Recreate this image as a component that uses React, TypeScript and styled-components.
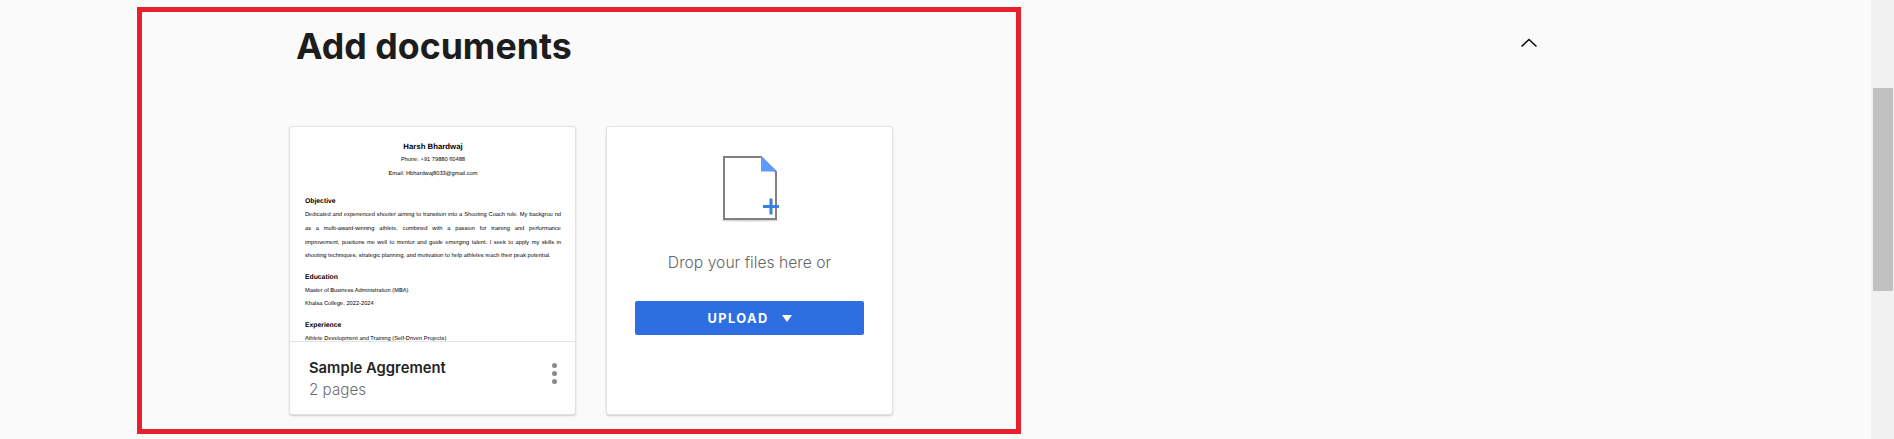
import React from "react";
import styled, { createGlobalStyle } from "styled-components";

const Global = createGlobalStyle`
  html, body { margin: 0; padding: 0; height: 439px; overflow: hidden; background: #fafafa; }
  * { box-sizing: border-box; }
`;

const Page = styled.div`
  position: relative;
  display: flex;
  width: 1894px;
  height: 439px;
  font-family: Inter, "Liberation Sans", sans-serif;
  overflow: hidden;
`;

const Main = styled.main`
  flex: 1;
  padding: 0 0 0 289px;
`;

const Header = styled.header`
  display: flex;
  align-items: center;
  justify-content: space-between;
  width: 1249px;
  height: 92px;
  padding: 0 0 6px 7px;
`;

const Title = styled.h1`
  margin: 6px 0 0;
  font-size: 35.7px;
  line-height: 44px;
  font-weight: 700;
  color: #1d1d1d;
`;

const Collapse = styled.svg`
  display: block;
  width: 18px;
  height: 12px;
  fill: none;
  stroke: #111;
  stroke-width: 1.6;
`;

const Cards = styled.div`
  display: flex;
  gap: 30px;
  margin-top: 34px;
`;

const Card = styled.article`
  width: 287px;
  height: 289px;
  background: #fff;
  border-radius: 3px;
  border: 1px solid #e3e3e3;
  box-shadow: 0 1px 2px rgba(0, 0, 0, 0.18);
  display: flex;
  flex-direction: column;
  overflow: hidden;
`;

const Preview = styled.div`
  height: 215px;
  padding: 13px 14px 0 15px;
  border-bottom: 1px solid #e4e4e4;
  overflow: hidden;
  font-family: "Liberation Sans", Arial, sans-serif;
  text-rendering: geometricPrecision;
  color: #000;
  flex: none;
`;

const DocName = styled.div`
  font-size: 7.8px;
  font-weight: 700;
  line-height: 14px;
  text-align: center;
`;

const DocCentered = styled.div`
  font-size: 5.7px;
  line-height: 13.7px;
  text-align: center;
`;

const DocHeading = styled.div<{ $gap: number }>`
  margin-top: ${(p) => p.$gap}px;
  font-size: 6.8px;
  font-weight: 700;
  line-height: 13.7px;
`;

const DocLine = styled.div<{ $fill?: boolean }>`
  font-size: 5.7px;
  line-height: 13.7px;
  text-align: ${(p) => (p.$fill ? "justify" : "left")};
  text-align-last: ${(p) => (p.$fill ? "justify" : "left")};
`;

const CardFooter = styled.footer`
  flex: 1;
  display: flex;
  align-items: center;
  justify-content: space-between;
  padding: 2px 18px 0 19px;
`;

const FileName = styled.div`
  font-size: 14.8px;
  line-height: 21px;
  font-weight: 600;
  color: #242424;
`;

const FilePages = styled.div`
  font-size: 15.2px;
  line-height: 22px;
  font-weight: 300;
  color: #6e6e6e;
`;

const Kebab = styled.div`
  display: flex;
  flex-direction: column;
  gap: 3px;
  margin-top: -12px;
`;

const Dot = styled.span`
  width: 5px;
  height: 5px;
  border-radius: 50%;
  background: #8a8a8a;
`;

const DropCard = styled(Card)`
  align-items: center;
  padding-top: 29px;
`;

const DropIcon = styled.svg`
  display: block;
  width: 60px;
  height: 66px;
`;

const DropText = styled.p`
  margin: 29px 0 0;
  font-size: 15.7px;
  line-height: 24px;
  font-weight: 300;
  color: #666;
`;

const UploadButton = styled.button`
  display: flex;
  align-items: center;
  justify-content: center;
  gap: 13px;
  width: 229px;
  height: 34px;
  margin-top: 26px;
  border: 0;
  border-radius: 2px;
  background: #2d6fe0;
  color: #fff;
  font-family: Inter, "Liberation Sans", sans-serif;
  font-size: 12.8px;
  font-weight: 700;
  letter-spacing: 1.4px;
`;

const Caret = styled.svg`
  display: block;
  width: 10px;
  height: 7px;
  fill: #fff;
`;

const ScrollTrack = styled.div`
  flex: none;
  width: 23px;
  height: 100%;
  padding: 88px 1px 0 2px;
  background: #f1f1f1;
`;

const ScrollThumb = styled.div`
  height: 203px;
  background: #c1c1c1;
`;

const Highlight = styled.div`
  position: absolute;
  left: 137px;
  top: 7px;
  width: 884px;
  height: 427px;
  border: 5px solid #e6202c;
  pointer-events: none;
`;

export default function App() {
  return (
    <Page>
      <Global />
      <Main>
        <Header>
          <Title>Add documents</Title>
          <Collapse viewBox="0 0 18 12">
            <path d="M1.5 9.5 9 2.5l7.5 7" />
          </Collapse>
        </Header>
        <Cards>
          <Card>
            <Preview>
              <DocName>Harsh Bhardwaj</DocName>
              <DocCentered>Phone: +91 79880 60488</DocCentered>
              <DocCentered>Email: Hbhardwaj8033@gmail.com</DocCentered>
              <DocHeading $gap={14}>Objective</DocHeading>
              <DocLine $fill>Dedicated and experienced shooter aiming to transition into a Shooting Coach role. My backgrou nd</DocLine>
              <DocLine $fill>as a multi-award-winning athlete, combined with a passion for training and performance</DocLine>
              <DocLine $fill>improvement, positions me well to mentor and guide emerging talent. I seek to apply my skills in</DocLine>
              <DocLine>shooting techniques, strategic planning, and motivation to help athletes reach their peak potential.</DocLine>
              <DocHeading $gap={7}>Education</DocHeading>
              <DocLine>Master of Business Administration (MBA)</DocLine>
              <DocLine>Khalsa College, 2022-2024</DocLine>
              <DocHeading $gap={7}>Experience</DocHeading>
              <DocLine>Athlete Development and Training (Self-Driven Projects)</DocLine>
            </Preview>
            <CardFooter>
              <div>
                <FileName>Sample Aggrement</FileName>
                <FilePages>2 pages</FilePages>
              </div>
              <Kebab>
                <Dot />
                <Dot />
                <Dot />
              </Kebab>
            </CardFooter>
          </Card>
          <DropCard>
            <DropIcon viewBox="0 0 60 66">
              <ellipse cx="30" cy="64.5" rx="29" ry="1.2" fill="#d8d8d8" />
              <path d="M4 1h37l15 15v47H4z" fill="#fff" stroke="#808080" strokeWidth="2" />
              <path d="M41 0l16 15.5H41z" fill="#5c9aff" />
              <path d="M43 50.5h16M51 42.5v16" stroke="#3b7de0" strokeWidth="3" />
            </DropIcon>
            <DropText>Drop your files here or</DropText>
            <UploadButton>
              UPLOAD
              <Caret viewBox="0 0 10 7">
                <path d="M0 0h10L5 7z" />
              </Caret>
            </UploadButton>
          </DropCard>
        </Cards>
      </Main>
      <ScrollTrack>
        <ScrollThumb />
      </ScrollTrack>
      <Highlight />
    </Page>
  );
}
